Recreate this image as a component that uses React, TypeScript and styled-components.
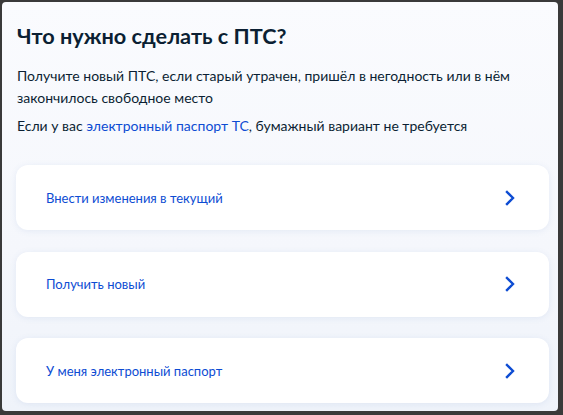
import React from 'react'
import styled, { createGlobalStyle } from 'styled-components'

const GlobalStyle = createGlobalStyle`
    html, body {
        margin: 0;
        padding: 0;
        background: #3a3a3a;
    }
    body {
        font-family: Lato, "Noto Sans", sans-serif;
        -webkit-font-smoothing: antialiased;
    }
`

const Frame = styled.div`
    box-sizing: border-box;
    width: 563px;
    height: 415px;
    padding: 2px 5px 4px 2px;
    background: #3a3a3a;
`

const Screen = styled.main`
    box-sizing: border-box;
    height: 100%;
    border-radius: 4px;
    background: linear-gradient(180deg, #fafbfe 0%, #f5f7fc 60%, #eff3fa 100%);
    padding: 20px 9px 0 14px;
    display: flex;
    flex-direction: column;
    overflow: hidden;
`

const Title = styled.h1`
    margin: 0 0 15px 1px;
    font-size: 21.7px;
    line-height: 28px;
    font-weight: 700;
    color: #0b1f33;
`

const Text = styled.p`
    margin: 0 0 6px 1px;
    font-size: 14px;
    line-height: 22px;
    color: #0b1f33;
`

const Link = styled.a`
    color: #0d4cd3;
    text-decoration: none;
`

const Options = styled.ul`
    list-style: none;
    margin: 22px 0 0;
    padding: 0;
    display: flex;
    flex-direction: column;
    gap: 21.5px;
`

const Option = styled.li`
    box-sizing: border-box;
    height: 65px;
    display: flex;
    align-items: center;
    justify-content: space-between;
    padding: 0 34px 0 30px;
    background: #ffffff;
    border-radius: 12px;
    box-shadow: 0 1px 6px rgba(102, 134, 190, 0.12);
    cursor: pointer;
`

const OptionLabel = styled.span`
    font-size: 13px;
    line-height: 20px;
    color: #0d4cd3;
`

const Chevron = () => (
    <svg width="10" height="16" viewBox="0 0 10 16" fill="none">
        <path d="M2 2l6 6-6 6" stroke="#0d4cd3" strokeWidth="2.4" strokeLinecap="square" strokeLinejoin="miter" />
    </svg>
)

const options = [
    'Внести изменения в текущий',
    'Получить новый',
    'У меня электронный паспорт',
]

export default function App() {
    return (
        <>
            <GlobalStyle />
            <Frame>
                <Screen>
                    <Title>Что нужно сделать с ПТС?</Title>
                    <Text>
                        Получите новый ПТС, если старый утрачен, пришёл в негодность или в нём закончилось свободное место
                    </Text>
                    <Text>
                        Если у вас <Link href="#">электронный паспорт ТС</Link>, бумажный вариант не требуется
                    </Text>
                    <Options>
                        {options.map(label => (
                            <Option key={label}>
                                <OptionLabel>{label}</OptionLabel>
                                <Chevron />
                            </Option>
                        ))}
                    </Options>
                </Screen>
            </Frame>
        </>
    )
}
